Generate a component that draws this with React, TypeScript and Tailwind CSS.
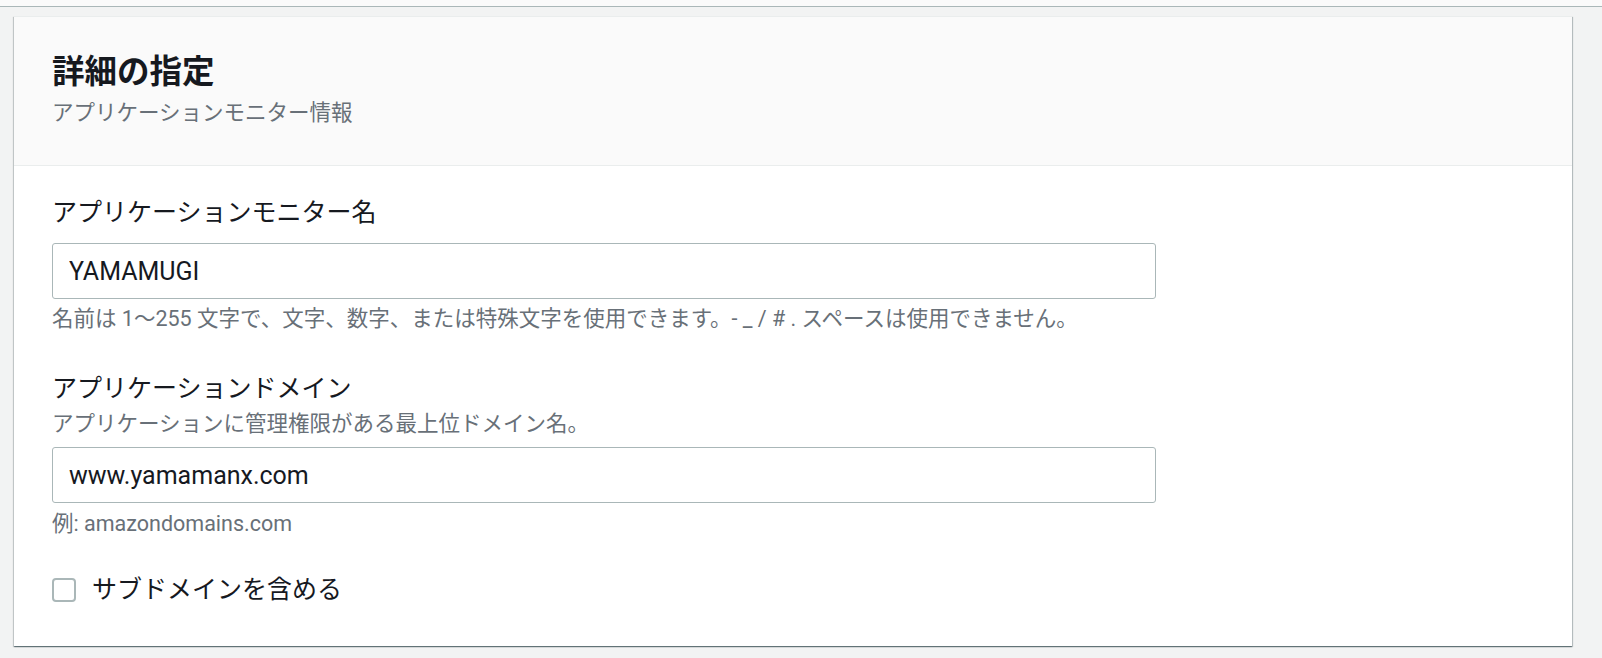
import React from 'react';

const font = { fontFamily: 'Roboto, "Noto Sans CJK JP", sans-serif' };

export default function App() {
  return (
    <div className="min-h-[658px] bg-[#f2f3f3]" style={font}>
      <div className="h-[7px] bg-[#fafafa] border-b border-[#aab7b8]" />
      <div className="pl-[14px] pr-[30px] pt-[9px] pb-[13px]">
        <section className="bg-white border-t border-[#eaeded] shadow-[0_1px_1px_0_rgba(0,28,36,0.4),1px_1px_1px_0_rgba(0,28,36,0.2),-1px_1px_1px_0_rgba(0,28,36,0.15)]">
          <header className="bg-[#fafafa] border-b border-[#eaeded] pl-[38px] pt-[35px] pb-[38px]">
            <h2 className="text-[32.5px] leading-[40px] font-bold text-[#16191f]">詳細の指定</h2>
            <p className="mt-[7px] text-[21.5px] leading-[28px] text-[#687078]">アプリケーションモニター情報</p>
          </header>
          <div className="pl-[38px] pt-[31px] pb-[40px]">
            <label className="block text-[25px] leading-[32px] text-[#16191f]">アプリケーションモニター名</label>
            <input
              readOnly
              value="YAMAMUGI"
              className="mt-[14px] block w-[1104px] h-[56px] rounded-[3px] border border-[#aab7b8] bg-white px-[16px] text-[25px] text-[#16191f] outline-none"
            />
            <p className="mt-[6px] text-[21.5px] leading-[28px] text-[#687078]">
              名前は 1〜255 文字で、文字、数字、または特殊文字を使用できます。- _ / # . スペースは使用できません。
            </p>

            <label className="mt-[40px] block text-[25px] leading-[32px] text-[#16191f]">アプリケーションドメイン</label>
            <p className="mt-[5px] text-[21.5px] leading-[28px] text-[#687078]">アプリケーションに管理権限がある最上位ドメイン名。</p>
            <input
              readOnly
              value="www.yamamanx.com"
              className="mt-[9px] block w-[1104px] h-[56px] rounded-[3px] border border-[#aab7b8] bg-white px-[16px] text-[25px] text-[#16191f] outline-none"
            />
            <p className="mt-[7px] text-[21.5px] leading-[28px] text-[#687078]">例: amazondomains.com</p>

            <label className="mt-[36px] flex items-center gap-[16px] text-[25px] leading-[32px] text-[#16191f]">
              <span className="block w-[24px] h-[24px] rounded-[4px] border-2 border-[#aab7b8] bg-white" />
              サブドメインを含める
            </label>
          </div>
        </section>
      </div>
    </div>
  );
}
